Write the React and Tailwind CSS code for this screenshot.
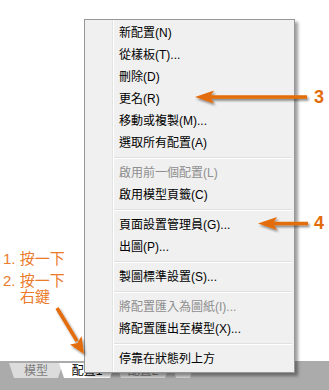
import React from "react";

const groups = [
  [
    { t: "新配置(N)" },
    { t: "從樣板(T)..." },
    { t: "刪除(D)" },
    { t: "更名(R)" },
    { t: "移動或複製(M)..." },
    { t: "選取所有配置(A)" },
  ],
  [{ t: "啟用前一個配置(L)", d: true }, { t: "啟用模型頁籤(C)" }],
  [{ t: "頁面設置管理員(G)..." }, { t: "出圖(P)..." }],
  [{ t: "製圖標準設置(S)..." }],
  [{ t: "將配置匯入為圖紙(I)...", d: true }, { t: "將配置匯出至模型(X)..." }],
  [{ t: "停靠在狀態列上方" }],
];

function Menu() {
  return (
    <div className="absolute left-[84px] top-[19px] w-[211px] flex border border-[#979797] bg-[#f0f0f0] shadow-[3px_3px_3px_rgba(0,0,0,0.38)]">
      <div className="w-[28px] shrink-0 border-r border-[#e2e3e3]" />
      <div className="w-px shrink-0 bg-white" />
      <div className="flex-1 flex flex-col py-[2px] pr-[2px]">
        {groups.map((g, gi) => (
          <React.Fragment key={gi}>
            {gi > 0 && (
              <div className="h-[8px] flex flex-col justify-center">
                <div className="h-px bg-[#e0e0e0]" />
                <div className="h-px bg-white" />
              </div>
            )}
            {g.map((it) => (
              <div
                key={it.t}
                className={
                  "h-[22px] flex items-center pl-[5px] text-[12px] whitespace-nowrap " +
                  (it.d ? "text-[#8e8e8e]" : "text-black")
                }
              >
                {it.t}
              </div>
            ))}
          </React.Fragment>
        ))}
      </div>
    </div>
  );
}

function Arrows() {
  const c = "#e36c09";
  return (
    <svg className="absolute left-0 top-0 pointer-events-none" width="329" height="390" viewBox="0 0 329 390">
      <defs>
        <filter id="sh" x="-20%" y="-50%" width="140%" height="200%">
          <feDropShadow dx="1.5" dy="2" stdDeviation="1.3" floodColor="#000" floodOpacity="0.45" />
        </filter>
      </defs>
      <g filter="url(#sh)">
        <line x1="307" y1="97" x2="208" y2="97" stroke={c} strokeWidth="3.5" />
        <polygon points="195,97 214,90.5 210,97 214,103.5" fill={c} />
      </g>
      <g filter="url(#sh)">
        <line x1="308" y1="223.5" x2="272" y2="223.5" stroke={c} strokeWidth="3.5" />
        <polygon points="258,223.5 277,217 273,223.5 277,230" fill={c} />
      </g>
      <g filter="url(#sh)">
        <line x1="57" y1="308" x2="77" y2="341" stroke={c} strokeWidth="3.5" />
        <polygon points="84,354 70,344.5 77.5,343 81.5,336" fill={c} />
      </g>
    </svg>
  );
}

export default function App() {
  return (
    <div className="relative w-[329px] h-[390px] overflow-hidden bg-white flex flex-col font-['Liberation_Sans','Noto_Sans_CJK_TC',sans-serif]">
      <div className="flex-1 bg-white" />
      <div className="h-[29px] bg-[#ababab] flex items-start pt-[2px] pl-[9px]">
        <div className="w-[54px] h-[15px] bg-[#dcdcdc] flex items-center justify-center text-[12px] leading-none text-[#7c7c7c] [clip-path:polygon(0_0,100%_0,calc(100%-5px)_100%,5px_100%)]">
          模型
        </div>
        <div className="-ml-[4px] w-[56px] h-[15px] bg-white flex items-center justify-center text-[12px] leading-none text-black [clip-path:polygon(0_0,100%_0,calc(100%-5px)_100%,5px_100%)]">
          配置1
        </div>
        <div className="ml-[1px] w-[54px] h-[15px] bg-[#d6d6d6] flex items-center justify-center text-[12px] leading-none text-[#7c7c7c] [clip-path:polygon(0_0,100%_0,calc(100%-5px)_100%,5px_100%)]">
          配置2
        </div>
        <div className="ml-[2px] w-[22px] h-[15px] bg-[#d6d6d6] flex items-center justify-center text-[10px] leading-none text-[#7c7c7c] [clip-path:polygon(0_0,100%_0,calc(100%-4px)_100%,4px_100%)]">
          +
        </div>
      </div>

      <div className="absolute left-[3px] top-[251px] text-[15px] text-[#eb7a2b] flex flex-col gap-[6px]">
        <div className="leading-[16px]">1. 按一下</div>
        <div className="flex flex-col">
          <div className="leading-[16px]">2. 按一下</div>
          <div className="leading-[16px] pl-[17px]">右鍵</div>
        </div>
      </div>

      <Menu />
      <Arrows />

      <div className="absolute left-[314px] top-[88px] text-[18px] leading-[18px] font-bold text-[#e36c09]">3</div>
      <div className="absolute left-[314px] top-[214px] text-[18px] leading-[18px] font-bold text-[#e36c09]">4</div>
    </div>
  );
}
